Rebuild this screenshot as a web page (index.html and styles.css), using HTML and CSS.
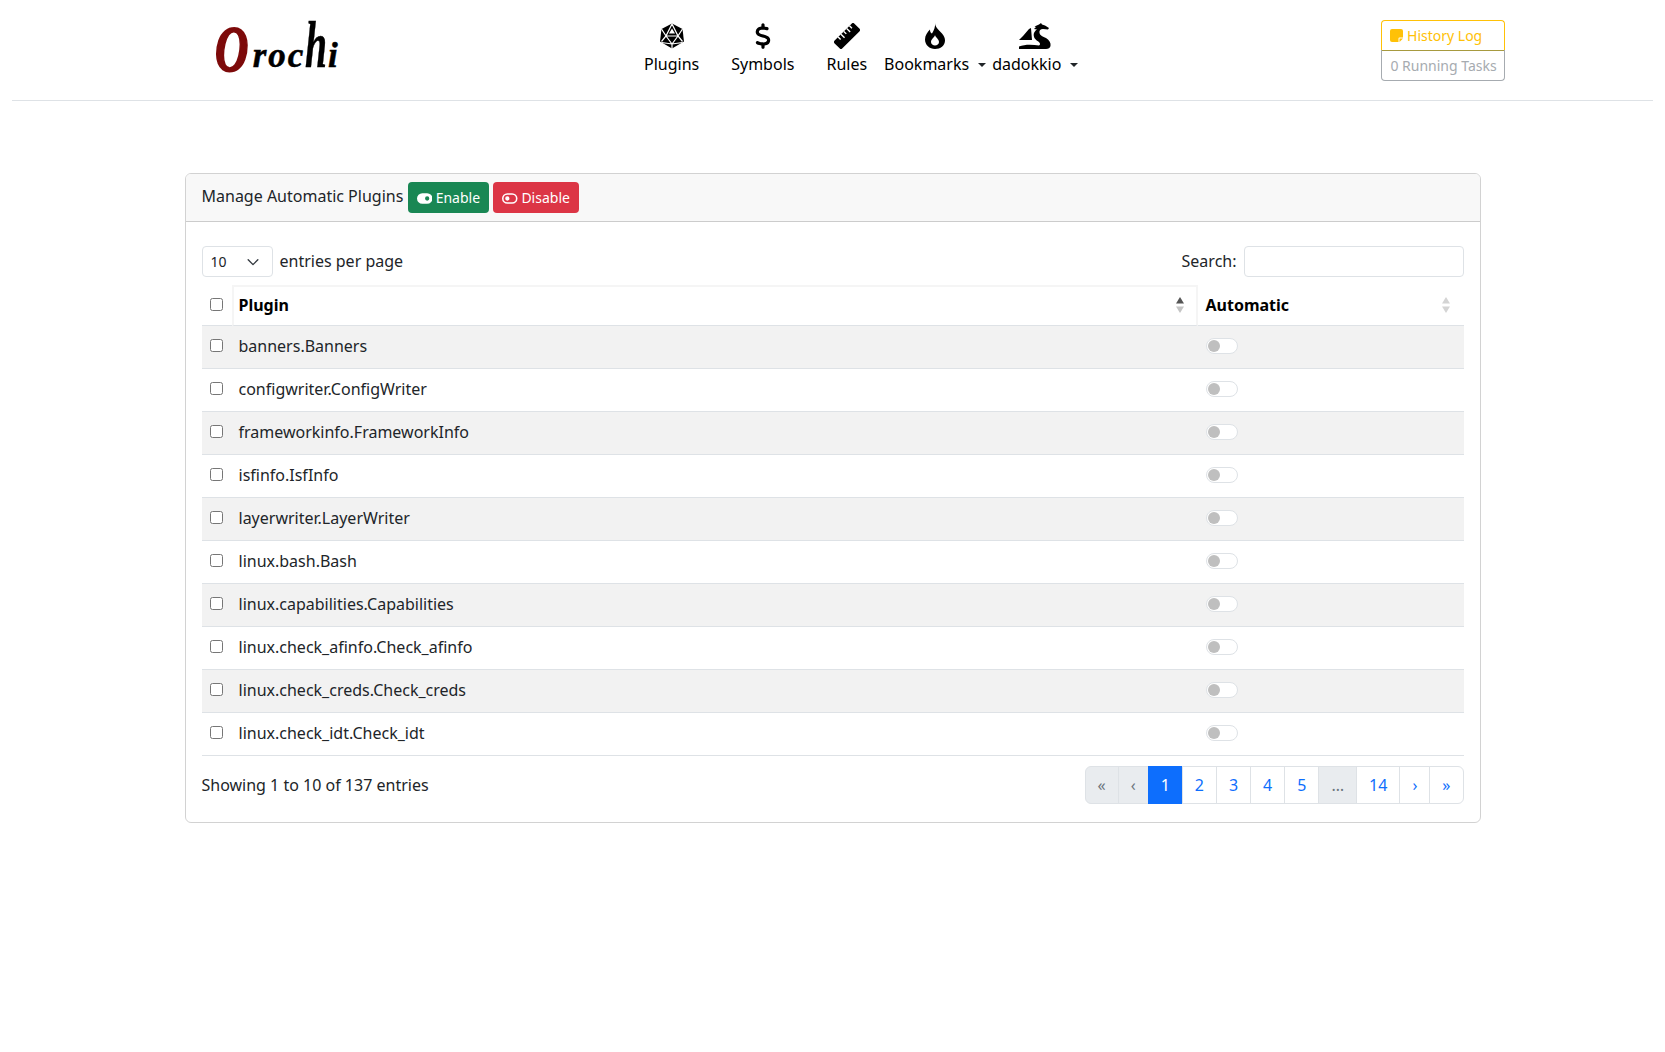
FILE: index.html
```html
<!DOCTYPE html>
<html lang="en">
<head>
  <meta charset="UTF-8" />
  <meta name="viewport" content="width=device-width, initial-scale=1.0" />
  <title>Orochi</title>
  <link rel="stylesheet" href="styles.css">
</head>
<body>
  <header class="topbar">
    <a class="logo" href="#"><span class="logo-o">O</span><span>r</span><span>o</span><span>c</span><span class="logo-h">h</span><span>i</span></a>
    <nav class="nav">
      <a class="nav-link" href="#">
        <svg class="nav-icon" width="24" height="26" viewBox="0 0 24 26"><path d="M12 .5 22.500 6 24 18.500 12 25.500 0 18.500 1.500 6Z" fill="#000"/><path d="M12 1 6 13h12ZM1.500 6 6 13 1.500 18.500M22.500 6 18 13l4.500 5.500M6 13l6 8 6-8M1.500 19.500 12 21l10.500-1.500M12 21v5" fill="none" stroke="#fff" stroke-width="1.200"/><path d="M12 5.500 15 10.500H9Z" fill="#fff"/></svg>
        <span>Plugins</span>
      </a>
      <a class="nav-link" href="#">
        <svg class="nav-icon" width="16" height="26" viewBox="0 0 320 512"><path d="M160 0c17.700 0 32 14.300 32 32V67.700c1.600 .2 3.100 .4 4.700 .7c.4 .1 .7 .1 1.100 .2l48 8.800c17.400 3.200 28.900 19.900 25.700 37.200s-19.900 28.900-37.200 25.700l-47.500-8.700c-31.300-4.600-58.900-1.500-78.300 6.200s-27.200 18.300-29 28.100c-2 10.700-.5 16.700 1.200 20.400c1.800 3.900 5.500 8.300 12.800 13.200c16.300 10.700 41.300 17.700 73.700 26.300l2.900 .8c28.600 7.600 63.600 16.800 89.600 33.800c14.200 9.300 27.600 21.900 35.900 39.500c8.500 17.900 10.300 37.900 6.400 59.200c-6.900 38-33.100 63.400-65.600 76.700c-13.700 5.600-28.600 9.200-44.400 11V480c0 17.700-14.300 32-32 32s-32-14.300-32-32V445.100c-.4-.1-.9-.1-1.300-.2c-24.400-3.800-64.500-14.300-91.500-26.300c-16.100-7.200-23.400-26.100-16.200-42.200s26.100-23.400 42.200-16.200c20.900 9.300 55.300 18.500 75.200 21.600c31.900 4.700 58.200 2 76-5.300c16.900-6.900 24.600-16.900 26.800-28.900c1.900-10.600 .4-16.700-1.300-20.400c-1.900-4-5.600-8.400-13-13.300c-16.400-10.700-41.500-17.700-74-26.300l-2.800-.7C119.400 279.300 84.400 270 58.400 253c-14.200-9.300-27.500-22-35.800-39.600c-8.400-17.900-10.100-37.900-6.100-59.200C23.700 116 52.300 91.200 84.800 78.300c13.300-5.300 27.900-8.900 43.200-11V32c0-17.700 14.300-32 32-32z"/></svg>
        <span>Symbols</span>
      </a>
      <a class="nav-link" href="#">
        <svg class="nav-icon" width="26" height="26" viewBox="0 0 26 26"><g transform="rotate(-45 13 13)"><rect x="-1" y="7.500" width="28" height="11" rx="2"/><path d="M6 7.500v3.500M10 7.500v5M14 7.500v3.500M18 7.500v5M22 7.500v3.500" stroke="#fff" stroke-width="1.400"/></g></svg>
        <span>Rules</span>
      </a>
      <a class="nav-link nav-dropdown" href="#">
        <svg class="nav-icon" width="20" height="26" viewBox="0 0 20 26"><path fill-rule="evenodd" d="M10 0C10 4 14 7 17 10.500 19 13 20 15 20 17.500 20 22.500 15.500 26 10 26 4.500 26 0 22 0 16.500 0 12.500 2.500 9 5 6.500 5 8.500 5.500 10 7 10.500 9 7.500 10.500 3.500 10 0ZM10 12C9.500 14.500 6 16 6 19 6 21 8 22.500 10 22.500 12 22.500 14 21 14 19 14 16 10.500 14.500 10 12Z"/></svg>
        <span>Bookmarks<i class="caret"></i></span>
      </a>
      <a class="nav-link nav-dropdown nav-user" href="#">
        <svg class="nav-icon" width="32" height="26" viewBox="0 0 32 26"><path d="M0 17 4 13 10 6 12 5 13 17H5ZM0 23.500C6 21 14 21.500 20 22.500 22 21.500 21 19.500 18.500 18 15.500 16 14 13 15 10 16 7.500 18 6.500 18 6.500L15 6 17 4 15.500 3.500 20 1.500 22 0 23 1.500 26 2.500 30 5 29 6.500 24 6C21.500 6 20 7.500 20.500 10 21 12.500 24 13.500 27 15 30.500 17 32 20 31.500 23 31 25 29.500 26 27 26H0Z"/></svg>
        <span>dadokkio<i class="caret"></i></span>
      </a>
    </nav>
    <div class="status-group">
      <a class="status-btn status-log" href="#">
        <svg width="13" height="13" viewBox="0 0 13 13"><path d="M2 0h9a2 2 0 0 1 2 2v6.500H9.500a1 1 0 0 0-1 1V13H2a2 2 0 0 1-2-2V2a2 2 0 0 1 2-2ZM13 9.500 9.500 13V9.500Z" fill="#ffc107"/></svg>
        History Log
      </a>
      <a class="status-btn status-tasks" href="#">0 Running Tasks</a>
    </div>
  </header>

  <main class="container">
    <section class="card">
      <div class="card-header">
        Manage Automatic Plugins
        <button class="btn btn-success"><svg width="15.500" height="11" viewBox="0 0 16 11"><path fill-rule="evenodd" d="M5.500 0h5a5.500 5.500 0 0 1 0 11h-5a5.500 5.500 0 0 1 0-11ZM10.500 3.300a2.200 2.200 0 1 0 0 4.400 2.200 2.200 0 0 0 0-4.400Z" fill="#fff"/></svg> Enable</button>
        <button class="btn btn-danger"><svg width="15.500" height="11" viewBox="0 0 16 11"><path fill-rule="evenodd" d="M5.500 0h5a5.500 5.500 0 0 1 0 11h-5a5.500 5.500 0 0 1 0-11ZM5.500 1.600a3.900 3.900 0 0 0 0 7.800h5a3.900 3.900 0 0 0 0-7.800ZM5.500 3.300a2.200 2.200 0 1 1 0 4.400 2.200 2.200 0 0 1 0-4.400Z" fill="#fff"/></svg> Disable</button>
      </div>
      <div class="card-body">
        <div class="table-top">
          <label class="per-page">
            <span class="select-wrap">
              <select class="per-page-select"><option>10</option></select>
              <svg class="select-arrow" width="14" height="14" viewBox="0 0 16 16"><path d="m2.500 5.500 5.500 5.500 5.500-5.500" fill="none" stroke="#343a40" stroke-width="1.600" stroke-linecap="round" stroke-linejoin="round"/></svg>
            </span>
            <span class="control-text">entries per page</span>
          </label>
          <label class="search"><span class="control-text">Search:</span> <input class="search-input" type="search"></label>
        </div>

        <table class="plugins">
          <colgroup><col class="col-check"><col class="col-plugin"><col class="col-auto"></colgroup>
          <thead>
            <tr>
              <th class="check-cell"><input type="checkbox"></th>
              <th class="sorted"><span class="th-inner">Plugin <svg width="8" height="16" viewBox="0 0 8 16"><path d="M4 0 8 6.500H0Z" fill="#555"/><path d="M4 16 8 9.500H0Z" fill="#c4c4c4"/></svg></span></th>
              <th class="auto-head"><span class="th-inner">Automatic <svg width="8" height="16" viewBox="0 0 8 16"><path d="M4 0 8 6.500H0Z" fill="#d4d4d4"/><path d="M4 16 8 9.500H0Z" fill="#d4d4d4"/></svg></span></th>
            </tr>
          </thead>
          <tbody>
            <tr><td class="check-cell"><input type="checkbox"></td><td class="name-cell">banners.Banners</td><td><span class="switch"></span></td></tr>
            <tr><td class="check-cell"><input type="checkbox"></td><td class="name-cell">configwriter.ConfigWriter</td><td><span class="switch"></span></td></tr>
            <tr><td class="check-cell"><input type="checkbox"></td><td class="name-cell">frameworkinfo.FrameworkInfo</td><td><span class="switch"></span></td></tr>
            <tr><td class="check-cell"><input type="checkbox"></td><td class="name-cell">isfinfo.IsfInfo</td><td><span class="switch"></span></td></tr>
            <tr><td class="check-cell"><input type="checkbox"></td><td class="name-cell">layerwriter.LayerWriter</td><td><span class="switch"></span></td></tr>
            <tr><td class="check-cell"><input type="checkbox"></td><td class="name-cell">linux.bash.Bash</td><td><span class="switch"></span></td></tr>
            <tr><td class="check-cell"><input type="checkbox"></td><td class="name-cell">linux.capabilities.Capabilities</td><td><span class="switch"></span></td></tr>
            <tr><td class="check-cell"><input type="checkbox"></td><td class="name-cell">linux.check_afinfo.Check_afinfo</td><td><span class="switch"></span></td></tr>
            <tr><td class="check-cell"><input type="checkbox"></td><td class="name-cell">linux.check_creds.Check_creds</td><td><span class="switch"></span></td></tr>
            <tr><td class="check-cell"><input type="checkbox"></td><td class="name-cell">linux.check_idt.Check_idt</td><td><span class="switch"></span></td></tr>
          </tbody>
        </table>

        <div class="table-bottom">
          <div>Showing 1 to 10 of 137 entries</div>
          <ul class="pagination">
            <li class="page disabled"><a href="#">«</a></li>
            <li class="page disabled"><a href="#">‹</a></li>
            <li class="page active"><a href="#">1</a></li>
            <li class="page"><a href="#">2</a></li>
            <li class="page"><a href="#">3</a></li>
            <li class="page"><a href="#">4</a></li>
            <li class="page"><a href="#">5</a></li>
            <li class="page disabled"><a href="#">…</a></li>
            <li class="page"><a href="#">14</a></li>
            <li class="page"><a href="#">›</a></li>
            <li class="page"><a href="#">»</a></li>
          </ul>
        </div>
      </div>
    </section>
  </main>
</body>
</html>
```

FILE: styles.css
```css
* { box-sizing: border-box; }
body { margin: 0; background: #fff; color: #212529;
  font-family: "Noto Sans", sans-serif; font-size: 16px; line-height: 1.5; }
a { text-decoration: none; color: inherit; }

/* top bar */
.topbar { display: flex; align-items: center; height: 101px; margin: 0 12px;
  padding-left: 203px; border-bottom: 1px solid #dee2e6; }
.logo { display: flex; align-items: baseline; width: 120px; height: 62px; margin-top: -10px; color: #000;
  font-family: "Liberation Serif", serif; font-style: italic; font-weight: bold;
  font-size: 35px; line-height: 62px; letter-spacing: 2px; -webkit-text-stroke: 0.5px #000; }
.logo-o { display: inline-block; margin-right: -12px; color: #7d0a0a; font-size: 66px; -webkit-text-stroke: 2px #7d0a0a;
  transform: scaleX(0.7) translateY(4px); transform-origin: left bottom; }
.logo-h { display: inline-block; margin-right: -16px; font-size: 66px; line-height: 40px;
  transform: scaleX(0.6); transform-origin: left bottom; }
.nav { display: flex; margin-left: 293px; margin-top: -1px; }
.nav-link { display: flex; flex-direction: column; align-items: center; padding: 0 16px; color: #000; }
.nav-dropdown { padding: 0 4px 0 1px; }
.nav-user { margin-left: 1px; }
.nav-icon { display: block; margin-bottom: 3px; }
.caret { display: inline-block; margin-left: 9px; vertical-align: 3px;
  border-top: 4.800px solid #212529; border-left: 4.800px solid transparent; border-right: 4.800px solid transparent; }
.status-group { display: flex; flex-direction: column; width: 124px; margin-left: 299px; font-size: 14px; }
.status-btn { display: block; height: 31px; padding: 4px 8px; line-height: 21px; white-space: nowrap; }
.status-log { color: #ffc107; border: 1px solid #ffc107; border-bottom-color: #a79a3f; border-radius: 4px 4px 0 0; }
.status-log svg { vertical-align: -1px; }
.status-tasks { margin-top: -1px; padding-top: 5px; color: #a6abb0; border: 1px solid #a6abb0; border-top: 0; border-radius: 0 0 4px 4px; }

/* card */
.container { max-width: 1320px; margin: 72px auto 0; padding: 0 12px; }
.card { border: 1px solid rgba(0,0,0,0.175); border-radius: 6px; }
.card-header { padding: 8px 16px; background: #f8f8f8; border-bottom: 1px solid rgba(0,0,0,0.175); border-radius: 5px 5px 0 0; }
.card-body { padding: 24px 16px 18px; }
.btn { display: inline-block; vertical-align: middle; height: 31px; padding: 4px 8px; color: #fff;
  font: 14px/21px "Noto Sans", sans-serif; border: 1px solid transparent; border-radius: 4px; }
.btn svg { vertical-align: -1px; }
.btn-success { background: #198754; }
.btn-danger { background: #dc3545; }

/* table controls */
.table-top { display: flex; justify-content: space-between; align-items: center; margin-bottom: 8px; }
.control-text { margin-top: -2px; }
.per-page { display: flex; align-items: center; gap: 7px; }
.select-wrap { position: relative; display: block; height: 31px; }
.per-page-select { appearance: none; width: 71px; height: 31px; padding: 0 8px; background: #fff; color: #212529;
  font: 14px "Noto Sans", sans-serif; border: 1px solid #dee2e6; border-radius: 4px; }
.select-arrow { position: absolute; top: 9px; right: 13px; pointer-events: none; }
.search { display: flex; align-items: center; gap: 7px; }
.search-input { width: 220px; height: 31px; border: 1px solid #dee2e6; border-radius: 4px; }

/* table */
.plugins { width: 100%; table-layout: fixed; border-collapse: separate; border-spacing: 0; }
.col-check { width: 30px; }
.col-auto { width: 266px; }
.plugins th, .plugins td { padding: 8px 8px 10px; text-align: left; border-bottom: 1px solid #dee2e6; }
.plugins td { vertical-align: top; }
.plugins td.name-cell { padding-left: 7px; }
.plugins th { height: 41px; padding: 5px 8px 7px; color: #000; font-weight: bold; }
.plugins th.sorted { border: 2px solid #f5f5f5; border-bottom: 1px solid #dee2e6; padding-left: 5px; padding-top: 4px; }
.plugins th.sorted .th-inner { padding-right: 4px; }
.plugins th.auto-head { padding-top: 6px; padding-bottom: 6px; }
.plugins tbody tr:nth-child(odd) td { background: #f2f2f2; }
.plugins input[type="checkbox"] { display: block; margin: 5px 0 0; }
.plugins th input[type="checkbox"] { margin: 0; }
.plugins .check-cell { padding-right: 0; }
.th-inner { display: flex; align-items: center; justify-content: space-between; padding-right: 6px; }
.switch { position: relative; display: block; width: 32px; height: 16px; margin: 4px 0 0 0; background: #fff; border: 1px solid #dee2e6; border-radius: 8px; }
.switch::before { content: ""; position: absolute; left: 1px; top: 1px; width: 12px; height: 12px; background: #bfbfbf; border-radius: 50%; }

/* footer of table */
.table-bottom { display: flex; justify-content: space-between; align-items: center; margin-top: 10px; }
.pagination { display: flex; margin: 0; padding: 0; list-style: none; }
.page a { display: block; padding: 6px 12px; margin-left: -1px; color: #0d6efd; background: #fff; border: 1px solid #dee2e6; }
.page:first-child a { margin-left: 0; border-radius: 6px 0 0 6px; }
.page:last-child a { border-radius: 0 6px 6px 0; }
.page.active a { color: #fff; background: #0d6efd; border-color: #0d6efd; }
.page.disabled a { color: #6c757d; background: #e9ecef; }
```
